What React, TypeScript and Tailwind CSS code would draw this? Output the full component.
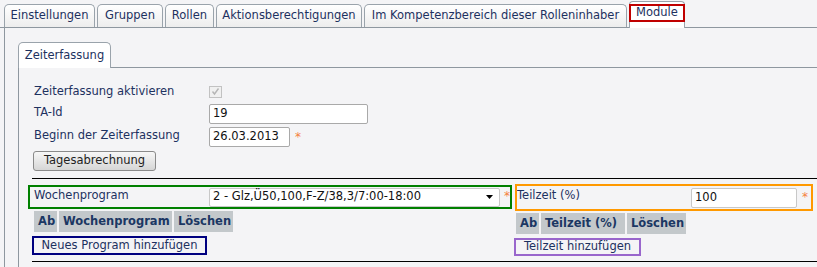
import React from "react";

const tabs = [
  { label: "Einstellungen", w: "w-[91px]" },
  { label: "Gruppen", w: "w-[66px]" },
  { label: "Rollen", w: "w-[49px]" },
  { label: "Aktionsberechtigungen", w: "w-[146px]" },
  { label: "Im Kompetenzbereich dieser Rolleninhaber", w: "w-[263px]" },
];

function Star() {
  return <span className="text-[#f5803e] text-[12px] leading-none">*</span>;
}

function HeaderCell({ children, w }: { children: React.ReactNode; w: string }) {
  return (
    <div className={`${w} h-[21px] flex items-center pl-[4px] bg-[#c3c8cb] font-bold text-[#1b3763] whitespace-nowrap`}>
      {children}
    </div>
  );
}

export default function App() {
  return (
    <div className="w-[817px] h-[267px] overflow-hidden bg-[#f4f4f6] font-['DejaVu_Sans',Verdana,sans-serif] text-[11.5px] text-[#1d3160]">
      {/* main tabs */}
      <div className="flex items-end gap-[2px] pl-[4px] h-[28px] border-b border-[#8e979f]">
        {tabs.map((t) => (
          <div
            key={t.label}
            className={`${t.w} h-[23px] flex items-center justify-center whitespace-nowrap border border-b-0 border-[#9aa3ab] rounded-t-[5px] bg-gradient-to-b from-white to-[#ededed]`}
          >
            {t.label}
          </div>
        ))}
        <div className="relative w-[56px] h-[27px] mb-[-1px] border border-b-0 border-[#9aa3ab] rounded-t-[4px] bg-white">
          <div className="absolute left-[-1px] top-[2px] w-[56px] h-[18px] border-2 border-[#c00000] flex items-center justify-center">
            Module
          </div>
        </div>
      </div>

      {/* outer panel */}
      <div className="ml-[4px] border-l border-[#8e979f] h-[239px]">
        <div className="ml-[13px]">
          <div className="flex items-end h-[40px] border-b border-[#8e979f]">
            <div className="w-[93px] h-[26px] mb-[-1px] flex items-center justify-center border border-b-0 border-[#9aa3ab] rounded-t-[5px] bg-white">
              Zeiterfassung
            </div>
          </div>

          <div className="border-l border-[#8e979f] h-[200px] pt-[13px]">
            <div className="pl-[15px]">
              <div className="flex items-center h-[21px]">
                <div className="w-[179px]">Zeiterfassung aktivieren</div>
                <div className="ml-[-4px] w-[13px] h-[12px] border border-[#c2c2c2] bg-[#f0f0f0] flex items-center justify-center">
                  <svg width="9" height="9" viewBox="0 0 9 9">
                    <path d="M1.5 4.5 L3.5 7 L7.5 1.5" fill="none" stroke="#b5b5b5" strokeWidth="1.4" />
                  </svg>
                </div>
              </div>
              <div className="flex items-center h-[20px] mt-[2px]">
                <div className="w-[175px] -mt-[2px]">TA-Id</div>
                <div className="w-[159px] h-[20px] border border-[#a9a9a9] rounded-[2px] bg-white pl-[3px] flex items-center text-[#111]">19</div>
              </div>
              <div className="flex items-center h-[20px] mt-[3px]">
                <div className="w-[175px] -mt-[2px]">Beginn der Zeiterfassung</div>
                <div className="w-[81px] h-[20px] border border-[#a9a9a9] rounded-[2px] bg-white pl-[3px] flex items-center text-[#111]">26.03.2013</div>
                <span className="ml-[5px] mt-[2px]"><Star /></span>
              </div>
              <div className="mt-[4px] ml-[-1px] w-[123px] h-[20px] flex items-center justify-center border border-[#8a8a8a] rounded-[3px] bg-gradient-to-b from-[#f7f7f7] to-[#d6d6d6] text-[#222]">
                Tagesabrechnung
              </div>
            </div>

            <div className="ml-[13px] mt-[7px] h-px bg-black" />

            <div className="flex gap-[3px] ml-[9px] mt-[5px]">
              {/* left */}
              <div className="w-[484px] pt-[1px]">
                <div className="h-[24px] border-2 border-[#008000] flex items-center pl-[4px]">
                  <div className="w-[175px] -mt-[2px]">Wochenprogram</div>
                  <div className="w-[291px] h-[19px] border border-[#c8c8c8] rounded-[2px] bg-white flex items-center pl-[3px] pr-[6px] text-[#111]">
                    <span className="flex-1 whitespace-nowrap">2 - Glz,Ü50,100,F-Z/38,3/7:00-18:00</span>
                    <svg width="7" height="4" viewBox="0 0 7 4">
                      <path d="M0 0 H7 L3.5 4 Z" fill="#000" />
                    </svg>
                  </div>
                  <span className="ml-[4px]"><Star /></span>
                </div>
                <div className="flex gap-[2px] mt-[2px] ml-[6px]">
                  <HeaderCell w="w-[23px]">Ab</HeaderCell>
                  <HeaderCell w="w-[113px]">Wochenprogram</HeaderCell>
                  <HeaderCell w="w-[59px]">Löschen</HeaderCell>
                </div>
                <div className="mt-[4px] ml-[4px] w-[175px] h-[19px] border-2 border-[#000080] flex items-center justify-center whitespace-nowrap">
                  Neues Program hinzufügen
                </div>
              </div>

              {/* right */}
              <div className="w-[298px]">
                <div className="h-[27px] border-2 border-[#ff9900] flex items-center">
                  <div className="w-[174px] -mt-[3px]">Teilzeit (%)</div>
                  <div className="w-[106px] h-[20px] border border-[#c8c8c8] rounded-[2px] bg-white flex items-center pl-[3px] text-[#111]">100</div>
                  <span className="ml-[5px]"><Star /></span>
                </div>
                <div className="flex gap-[2px] mt-[2px] ml-[1px]">
                  <HeaderCell w="w-[23px]">Ab</HeaderCell>
                  <HeaderCell w="w-[84px]">Teilzeit (%)</HeaderCell>
                  <HeaderCell w="w-[59px]">Löschen</HeaderCell>
                </div>
                <div className="mt-[4px] ml-[-1px] w-[127px] h-[18px] border-2 border-[#9966cc] flex items-center justify-center whitespace-nowrap">
                  Teilzeit hinzufügen
                </div>
              </div>
            </div>

            <div className="ml-[13px] mt-[5px] h-px bg-black" />
          </div>
        </div>
      </div>
    </div>
  );
}
